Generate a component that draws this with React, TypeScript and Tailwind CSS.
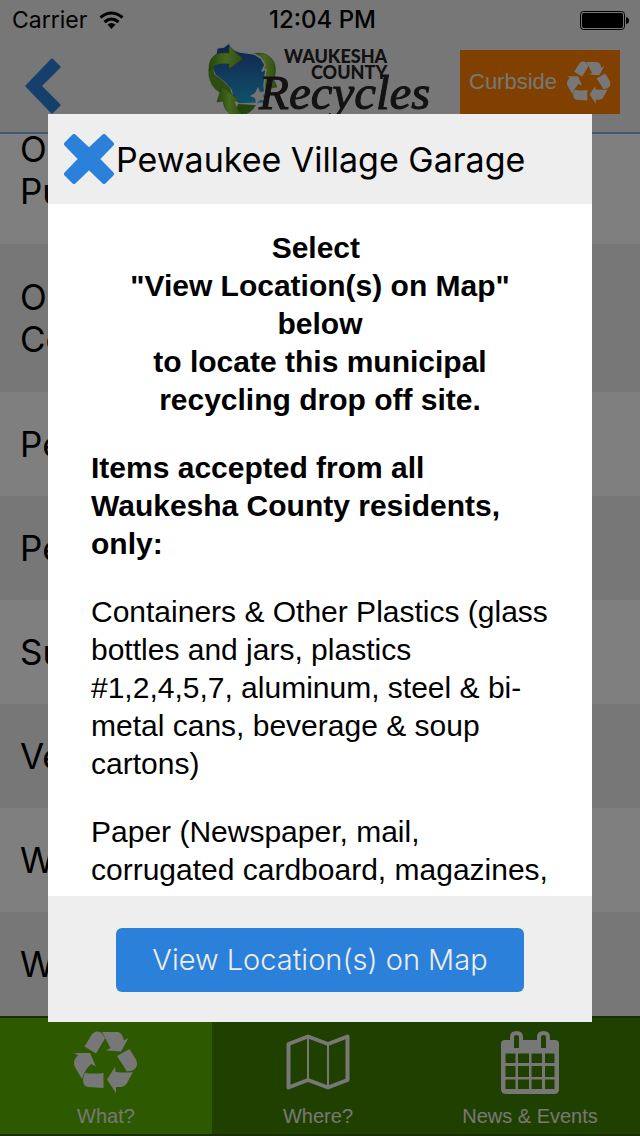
import type { ReactNode } from "react";

function RecycleIcon({ className }: { className: string }) {
  return (
    <svg viewBox="0 0 64 62" className={className} fill="currentColor" aria-hidden="true">
      <path d="M10.5 15.5 17.5 4Q20 0 24 .5Q27 .5 28.500 3L31 7.500 22 22.500Z" />
      <path d="M28 1H43.500Q46 1 48 4L50 9.500 54.500 7 47 20.500 32 19.500 36.500 17Z" />
      <path d="M43 25 55.500 18 62 28.500Q64 33 62 36.500Q60 40 53 40.500Z" />
      <path d="M59 41 53 52Q51 55.500 47 56H42V62L33 48.500 41 36 41.500 41Q53 42 59 41Z" />
      <path d="M11 42Q20 43 29.500 42V57L14 56Q9 55 9 49Q9 45 11 42Z" />
      <path d="M0 22H16L22 35.500 17 33Q10 40 8 48L1 36Q-1 32 1 28L4 24Z" />
    </svg>
  );
}

function ChevronLeftIcon() {
  return (
    <svg viewBox="0 0 36 56" className="h-14 w-9" aria-hidden="true">
      <path d="M27 2 34 9 15 28 34 47 27 54 2 28Z" fill="#2b80da" stroke="#2b80da" strokeWidth="3" strokeLinejoin="round" />
    </svg>
  );
}

function CloseIcon() {
  return (
    <svg viewBox="0 0 50 50" className="size-[50px]" aria-hidden="true">
      <path
        d="M10 2 25 16 40 2 48 10 33.500 25 48 40 40 48 25 33.500 10 48 2 40 16.500 25 2 10Z"
        fill="#2b80da" stroke="#2b80da" strokeWidth="4" strokeLinejoin="round"
      />
    </svg>
  );
}

function WifiIcon() {
  return (
    <svg viewBox="0 0 25 19" className="h-[19px] w-[25px]" fill="none" stroke="#000" strokeWidth="3" aria-hidden="true">
      <path d="M1.500 6.500Q12.500-2.500 23.500 6.500M5.500 11Q12.500 5 19.500 11" />
      <path d="M12.500 18 8.500 13.500Q12.500 10.500 16.500 13.500Z" fill="#000" stroke="none" />
    </svg>
  );
}

function BatteryIcon() {
  return (
    <svg viewBox="0 0 49 19" className="h-[19px] w-[49px]" aria-hidden="true">
      <rect x=".5" y=".5" width="44" height="18" rx="3" fill="none" stroke="#000" />
      <rect x="2" y="2" width="41" height="15" rx="2" />
      <path d="M46 6Q49 6.500 49 9.500Q49 12.500 46 13Z" />
    </svg>
  );
}

function MapIcon() {
  return (
    <svg viewBox="0 0 64 56" className="h-14 w-16" fill="none" stroke="currentColor" strokeLinejoin="round" aria-hidden="true">
      <path d="M2.500 10 22 2.500 42 10 61.500 2.500V46L42 53.500 22 46 2.500 53.500Z" strokeWidth="4" />
      <path d="M22 3V46M42 10V53" strokeWidth="2" />
    </svg>
  );
}

function CalendarIcon() {
  return (
    <svg viewBox="0 0 58 63" className="h-[63px] w-[58px]" fill="currentColor" aria-hidden="true">
      <path
        fillRule="evenodd"
        d="M4 9H9V6Q9 0 15.500 0Q22 0 22 6V9H36V6Q36 0 42.500 0Q49 0 49 6V9H54Q58 9 58 13V58Q58 63 53 63H5Q0 63 0 58V13Q0 9 4 9ZM15.500 4Q13 4 13 6V17H18V6Q18 4 15.500 4ZM42.500 4Q40 4 40 6V17H45V6Q45 4 42.500 4ZM4.500 22.500V32H14.500V22.500ZM17 22.500V32H28V22.500ZM30.500 22.500V32H41V22.500ZM44 22.500V32H53.500V22.500ZM4.500 35V46H14.500V35ZM17 35V46H28V35ZM30.500 35V46H41V35ZM44 35V46H53.500V35ZM4.500 48.500V58H14.500V48.500ZM17 48.500V58H28V48.500ZM30.500 48.500V58H41V48.500ZM44 48.500V58H53.500V48.500Z"
      />
    </svg>
  );
}

function Logo() {
  return (
    <svg viewBox="0 0 230 76" className="h-[76px] w-[230px]" role="img" aria-label="Waukesha County Recycles">
      <defs>
        <linearGradient id="lake" x1="0" y1="0" x2="0" y2="1">
          <stop offset="0" stopColor="#204090" />
          <stop offset=".35" stopColor="#2466b0" />
          <stop offset="1" stopColor="#1ea4d8" />
        </linearGradient>
        <linearGradient id="leaf" x1="0" y1="0" x2="1" y2="0">
          <stop offset="0" stopColor="#4c8a1c" />
          <stop offset=".5" stopColor="#8ed03c" />
          <stop offset="1" stopColor="#5c9a24" />
        </linearGradient>
      </defs>
      <path d="M48 14Q60 11 67 18Q73 24 71 35L70 40 73 47 56 50 54 31 60 33Q64 22 48 16Z" fill="url(#leaf)" stroke="#3c7018" strokeWidth=".5" />
      <path
        d="M13 8 20 7 25 3 28 9 36 12 50 14 57 18 61 25 58 31 62 29 60 45 62 63 35 64 29 59 27 50 20 42 11 35 8 28 11 20Z"
        fill="url(#lake)" stroke="#dbe7f2" strokeWidth="1.500" strokeLinejoin="round"
      />
      <path d="M11 35 18 40 26 48 28 55 19 54Q9 50 6 41Q2 30 8 19L11 25Q8 30 11 35Z" fill="#5c9a24" />
      <path d="M5 31Q4 16 16 13L25 13 25 6 39 19 25 29 25 24Q13 23 8 28Z" fill="url(#leaf)" stroke="#3c7018" strokeWidth=".5" />
      <path d="M29 71Q34 67 34 64L52 65Q47 74 37 76H28Z" fill="#4c8a1c" />
      <path d="M18 46 36 61 30 61Q31 67 38 74L30 76Q20 72 19 61L13 62Z" fill="url(#leaf)" stroke="#3c7018" strokeWidth=".5" />
      <path d="m54 47 2 5 6-1-3 5 3 5-6-1-4 4-1-6-5-2 5-3Z" fill="#ece9e7" />
      <text x="80" y="23" fontFamily="Lato" fontSize="18" fontWeight="900" fill="#272325">WAUKESHA</text>
      <text x="107" y="39" fontFamily="Lato" fontSize="18" fontWeight="900" fill="#272325">COUNTY</text>
      <text x="55" y="69" fontFamily="Liberation Serif" fontStyle="italic" fontSize="49" fill="#272325" stroke="#272325">Recycles</text>
    </svg>
  );
}

const sites = [
  { name: "Oconomowoc Public", tall: true },
  { name: "Oconomowoc County", tall: true },
  { name: "Pewaukee" },
  { name: "Pewaukee" },
  { name: "Sussex" },
  { name: "Vernon" },
  { name: "Wales" },
  { name: "Waukesha" },
];

function Tab({ label, active, children }: { label: string; active?: boolean; children: ReactNode }) {
  return (
    <button
      type="button"
      className={`flex w-[33.125%] flex-col items-center justify-between pt-3 pb-1 text-[#eee] ${active ? "bg-[#5ab400]" : ""}`}
    >
      <span className="flex h-16 items-center">{children}</span>
      <span className="font-['Liberation_Sans',sans-serif] text-xl leading-7">{label}</span>
    </button>
  );
}

export default function App() {
  return (
    <div className="relative flex h-screen flex-col overflow-hidden bg-white font-[Inter,sans-serif] text-black">
      <header className="border-b-2 border-[#80b0e8] bg-[#eee]">
        <div className="grid h-10 grid-cols-3 items-center pr-[11px] pl-3">
          <span className="flex items-center gap-3 text-[23px]">Carrier <WifiIcon /></span>
          <span className="pl-1 text-center text-2xl font-medium">12:04 PM</span>
          <span className="flex justify-end"><BatteryIcon /></span>
        </div>
        <div className="flex h-[92px] items-start justify-between pr-5 pl-[25px]">
          <button type="button" aria-label="Back" className="mt-[18px]"><ChevronLeftIcon /></button>
          <div className="ml-[116px]"><Logo /></div>
          <button type="button" className="mt-[10px] flex h-16 w-40 items-center justify-between bg-[#ff8000] px-[9px] text-[#eee]">
            <span className="font-['Liberation_Sans',sans-serif] text-[22px] leading-7">Curbside</span>
            <RecycleIcon className="h-[43px] w-11" />
          </button>
        </div>
      </header>
      <ul className="flex min-h-0 flex-1 flex-col justify-end overflow-hidden text-[35px] leading-[42px]">
        {sites.map(({ name, tall }, i) => (
          <li key={i} className={`flex shrink-0 items-center px-5 ${tall ? "h-[148px]" : "h-[104px]"} ${i % 2 ? "bg-[#eee]" : "bg-white"}`}>
            <span className={tall ? "w-60" : ""}>{name}</span>
          </li>
        ))}
      </ul>
      <nav className="flex h-[120px] border-y-2 border-[#306000] bg-[#408000]">
        <Tab label="What?" active><RecycleIcon className="h-[62px] w-16" /></Tab>
        <Tab label="Where?"><MapIcon /></Tab>
        <Tab label="News &amp; Events"><CalendarIcon /></Tab>
      </nav>

      <div className="absolute inset-0 flex bg-black/50 px-12 py-[114px]">
        <section role="dialog" aria-modal="true" aria-labelledby="site-title" className="flex min-w-0 flex-1 flex-col bg-white">
          <div className="flex h-[90px] items-center gap-[2px] bg-[#eee] pl-4">
            <button type="button" aria-label="Close"><CloseIcon /></button>
            <h1 id="site-title" className="text-[34px]">Pewaukee Village Garage</h1>
          </div>
          <div className="flex min-h-0 flex-1 flex-col gap-[30px] overflow-y-auto px-[43px] pt-[25px] font-['Liberation_Sans',sans-serif] text-[30px] leading-[38px] [scrollbar-width:none]">
            <p className="text-center font-bold">
              Select&nbsp;<br />"View Location(s) on Map" below<br />to locate this municipal recycling drop off site.
            </p>
            <p className="font-bold">Items accepted from all Waukesha County residents, only:</p>
            <p>
              Containers &amp; Other Plastics (glass bottles and jars, plastics #1,2,4,5,7, aluminum, steel &amp; bi-metal cans,
              beverage &amp; soup cartons)
            </p>
            <p>Paper (Newspaper, mail, corrugated cardboard, magazines,</p>
          </div>
          <div className="flex h-[126px] items-start justify-center bg-[#eee] pt-8">
            <button type="button" className="h-16 w-3/4 rounded-md bg-[#2b80da] text-[29px] font-light text-[#eee]">View Location(s) on Map</button>
          </div>
        </section>
      </div>
    </div>
  );
}
